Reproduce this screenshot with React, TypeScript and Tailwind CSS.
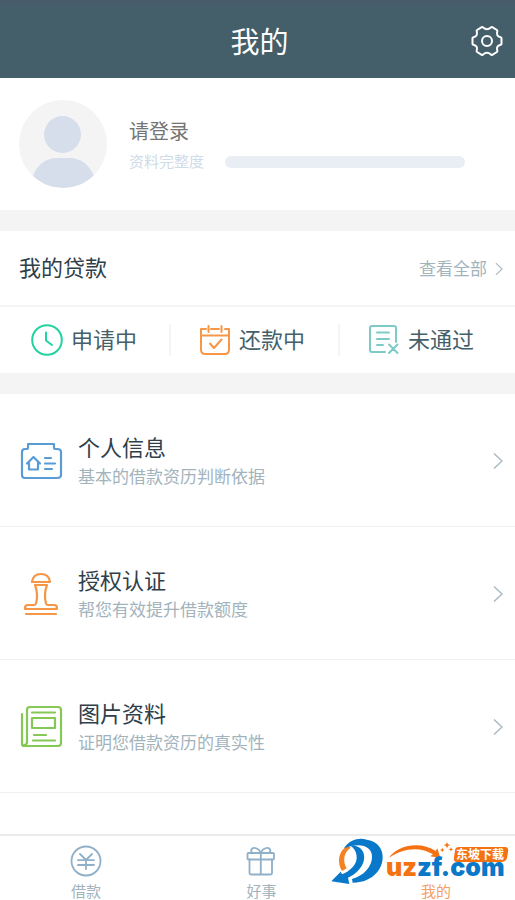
import type { ReactNode } from 'react';

interface Status {
  label: string;
  icon: ReactNode;
}

interface MenuItem {
  title: string;
  desc: string;
  icon: ReactNode;
}

function GearIcon() {
  return (
    <svg className="w-8 h-8" viewBox="0 0 32 32" fill="none" stroke="currentColor" strokeWidth="2" strokeLinejoin="round">
      <path d="M30.5 13.2V18.8Q30.4 19.6 29.6 19.8Q24.8 21 26.3 25.6Q26.5 26.5 25.9 27L21.3 29.8Q20.5 30.2 19.9 29.6Q16 26 12.1 29.6Q11.5 30.2 10.7 29.8L6.1 27Q5.5 26.5 5.7 25.6Q7.2 21 2.4 19.8Q1.6 19.6 1.5 18.8V13.2Q1.6 12.4 2.4 12.2Q7.2 11 5.7 6.4Q5.5 5.5 6.1 5L10.7 2.2Q11.5 1.8 12.1 2.4Q16 6 19.9 2.4Q20.5 1.8 21.3 2.2L25.9 5Q26.5 5.5 26.3 6.4Q24.8 11 29.6 12.2Q30.4 12.4 30.5 13.2Z" />
      <circle cx="16" cy="16" r="5" />
    </svg>
  );
}

function Chevron({ className }: { className: string }) {
  return (
    <svg className={className} viewBox="0 0 10 18" fill="none" stroke="#a9bac3" strokeWidth="1.5">
      <path d="M1 1.5L9 9L1 16.5" />
    </svg>
  );
}

function Avatar() {
  return (
    <svg className="w-22 h-22 shrink-0 rounded-full bg-[#f4f4f4]" viewBox="0 0 88 88" fill="#d6deec">
      <circle cx="43.5" cy="34.5" r="18.5" />
      <path d="M14 76C18 64 28 58 38 58H51C61 58 70 64 75 76C67 84 56 88 44 88S22 84 14 76Z" />
    </svg>
  );
}

const statuses: Status[] = [
  {
    label: '申请中',
    icon: (
      <svg className="w-8 h-8" viewBox="0 0 32 32" fill="none" stroke="#22d3a0" strokeWidth="2" strokeLinecap="round" strokeLinejoin="round">
        <circle cx="16" cy="16" r="14.8" />
        <path d="M15 8.5V16.5L21 21" />
      </svg>
    ),
  },
  {
    label: '还款中',
    icon: (
      <svg className="w-8 h-8" viewBox="0 0 32 32" fill="none" stroke="#f79646" strokeWidth="2" strokeLinecap="round" strokeLinejoin="round">
        <path d="M7 5H2V25.5Q2 30 6.5 30H25.5Q30 30 30 25.5V5H26M12 5H20" />
        <path d="M9.5 2V8M22.5 2V8M2 11.5H30M11 19.5L15 24L22.5 15.5" />
      </svg>
    ),
  },
  {
    label: '未通过',
    icon: (
      <svg className="w-8 h-8" viewBox="0 0 32 32" fill="none" stroke="#7ccbc9" strokeWidth="2" strokeLinecap="round" strokeLinejoin="round">
        <path d="M17 28H4Q2 28 2 26V4Q2 2 4 2H26Q28 2 28 4V18" />
        <path d="M9 8.5H21M9 15H21M9 21H15M21 20.5L29.5 29M29.5 20.5L21 29" />
      </svg>
    ),
  },
];

const menuItems: MenuItem[] = [
  {
    title: '个人信息',
    desc: '基本的借款资历判断依据',
    icon: (
      <svg className="w-11 h-11" viewBox="0 0 44 44" fill="none" stroke="#5b9bd5" strokeWidth="2.2" strokeLinecap="round" strokeLinejoin="round">
        <path d="M9 5H35V9Q35 10 36 10H38Q42 10 42 13V36Q42 39 38 39H6Q3 39 3 36V13Q3 10 6 10H8Q9 10 9 9Z" />
        <path d="M10 24V30.5H19V24M8 24.5L14.5 18L21 24.5M26 19H32M26 24.5H36M26 30H33" />
      </svg>
    ),
  },
  {
    title: '授权认证',
    desc: '帮您有效提升借款额度',
    icon: (
      <svg className="w-11 h-11" viewBox="0 0 44 44" fill="none" stroke="#f79646" strokeWidth="2.2" strokeLinecap="round" strokeLinejoin="round">
        <path d="M13 10Q14 2 22 2T31 10Z" />
        <path d="M16 13H28Q24.5 22 27 31.5Q27.5 33 29 33H35Q38 33 38 36V37H6V36Q6 33 9 33H15Q16.5 33 17 31.5Q19.5 22 16 13ZM7 42H37" />
      </svg>
    ),
  },
  {
    title: '图片资料',
    desc: '证明您借款资历的真实性',
    icon: (
      <svg className="w-11 h-11" viewBox="0 0 44 44" fill="none" stroke="#85c855" strokeWidth="2.2" strokeLinecap="round" strokeLinejoin="round">
        <path d="M8 38V5Q8 2 11 2H39Q42 2 42 5V38Q42 41 39 41H5Q3 41 3 39V9M8 37Q8 40 5 40" />
        <path d="M13 7.5H36M13 13H36V23H13ZM15 30H27M14 35.5H36" />
      </svg>
    ),
  },
];

function YenIcon() {
  return (
    <svg className="w-8 h-8 shrink-0" viewBox="0 0 32 32" fill="none" stroke="#8fb0c8" strokeWidth="1.8" strokeLinecap="round">
      <circle cx="16" cy="16" r="14.5" />
      <path d="M10 9L16 15L22 9M8 15.2H24M8 20H24M16 15V24" />
    </svg>
  );
}

function GiftIcon() {
  return (
    <svg className="w-8 h-8 shrink-0" viewBox="0 0 32 32" fill="none" stroke="#8fb0c8" strokeWidth="1.8" strokeLinecap="round" strokeLinejoin="round">
      <rect x="2.5" y="8" width="26.5" height="6.5" rx="1" />
      <path d="M4.5 14.5V28Q4.5 29.5 6 29.5H25.5Q27 29.5 27 28V14.5M15.8 8V29.5" />
      <path d="M15.8 8C14 3 8 1.5 6.5 4.5C5.8 6 6.3 7 7 8M15.8 8C17.5 3 23.5 1.5 25 4.5C25.7 6 25.2 7 24.5 8" />
    </svg>
  );
}

function SiteBadge() {
  return (
    <svg className="absolute -top-[11px] right-0 w-[195px] h-[75px] pointer-events-none" viewBox="0 0 195 75" aria-hidden="true">
      <g transform="scale(.3333)">
        <path d="M84 62C55 75 50 112 66 138L80 130C68 110 70 82 92 68Z" fill="#f58220" />
        <path d="M72 70C88 43 120 37 140 44C170 48 190 70 188 100C186 140 150 174 98 173L96 162C130 152 158 125 156 92C154 66 124 50 72 70Z" fill="#0a78c8" />
        <path d="M92 62C122 60 136 82 132 104C128 128 106 148 84 158L88 177L34 169L62 140L66 148C90 138 110 120 110 98C110 82 104 72 92 62Z" fill="#0a78c8" />
        <path d="M206 99C235 57 305 49 347 78L352 70L361 99L331 94L339 88C302 64 249 68 206 99Z" fill="#f57212" />
        <path d="M381 51L384 58L391 60L384 63L381 70L378 63L371 60L378 58ZM367 68L369 73L374 75L369 77L367 82L365 77L360 75L365 73ZM393 66L395 71L400 73L395 75L393 80L391 75L386 73L391 71Z" fill="#f57212" />
      </g>
      <text x="66" y="51" fontFamily="Inter, sans-serif" fontSize="25" fontWeight="900" fill="#0a78c8">
        <tspan fill="#f57212">uz</tspan>zf.com
      </text>
      <path d="M139 22H185Q189 22 188 27L187 33Q186 37 181 37H137Q133 37 134 32L135 26Q135 22 139 22Z" fill="#f57212" />
      <text x="136" y="34" fontFamily="'Noto Sans CJK SC', sans-serif" fontSize="12" fontWeight="700" fill="#fff">
        东坡下载
      </text>
    </svg>
  );
}

export default function App() {
  return (
    <div className="min-h-screen flex flex-col bg-white font-[Roboto,'Noto_Sans_CJK_SC',sans-serif]">
      <header className="h-[78px] px-3 grid grid-cols-[36px_1fr_32px] items-center bg-[#455f6a] border-t-4 border-[#475b6a] text-white">
        <h1 className="col-start-2 pt-1 text-center text-[29px] leading-10">我的</h1>
        <button type="button" aria-label="设置">
          <GearIcon />
        </button>
      </header>

      <section className="h-[132px] pl-[19px] pr-[50px] flex items-center gap-[22px]">
        <Avatar />
        <div className="flex-1 pt-1">
          <a href="#login" className="block text-xl leading-8 text-[#757575]">请登录</a>
          <div className="flex items-center gap-[21px]">
            <span className="text-[15px] leading-7 text-[#cfdbe6]">资料完整度</span>
            <div className="flex-1 h-3 rounded-full bg-[#e9edf4]" />
          </div>
        </div>
      </section>

      <section className="border-y-[21px] border-[#f4f4f4]">
        <div className="h-[76px] pl-[19px] pr-3 pt-0.5 flex items-center justify-between border-b-2 border-[#f5f5f5]">
          <h2 className="text-[22px] leading-7 text-[#2f404a]">我的贷款</h2>
          <a href="#loans" className="flex items-center gap-2 text-[17px] leading-7 text-[#a3b3bc]">
            查看全部
            <Chevron className="w-2 h-[14px]" />
          </a>
        </div>
        <div className="h-[66px] pr-2 grid grid-cols-3 items-center">
          {statuses.map((s, i) => (
            <button
              key={s.label}
              type="button"
              className={`h-8 flex items-center gap-2 text-[22px] text-[#455f6a] ${i > 0 ? 'pl-7 border-l-2 border-[#f4f4f4]' : 'pl-[31px]'}`}
            >
              {s.icon}
              {s.label}
            </button>
          ))}
        </div>
      </section>

      <ul>
        {menuItems.map((m) => (
          <li key={m.title} className="border-b border-[#f0f0f0]">
            <a href="#detail" className="h-[132px] pl-[19px] pr-3 pt-0.5 flex items-center gap-[15px]">
              {m.icon}
              <div className="flex-1 pt-1">
                <h3 className="text-[22px] leading-7 text-[#2f404a]">{m.title}</h3>
                <p className="text-[17px] leading-7 text-[#a3b3bc]">{m.desc}</p>
              </div>
              <Chevron className="w-[10px] h-[18px]" />
            </a>
          </li>
        ))}
      </ul>

      <nav className="relative mt-auto h-[66px] pt-[9px] pl-[70px] pr-16 flex justify-between border-t-2 border-[#ebebeb] text-[15px] leading-4 text-[#a3b3bc]">
        <a href="#loan" className="flex flex-col items-center gap-[7px]">
          <YenIcon />
          借款
        </a>
        <a href="#good" className="flex flex-col items-center gap-[7px]">
          <GiftIcon />
          好事
        </a>
        <a href="#me" className="pt-[39px] text-[#f3a066]">
          我的
        </a>
        <SiteBadge />
      </nav>
    </div>
  );
}
